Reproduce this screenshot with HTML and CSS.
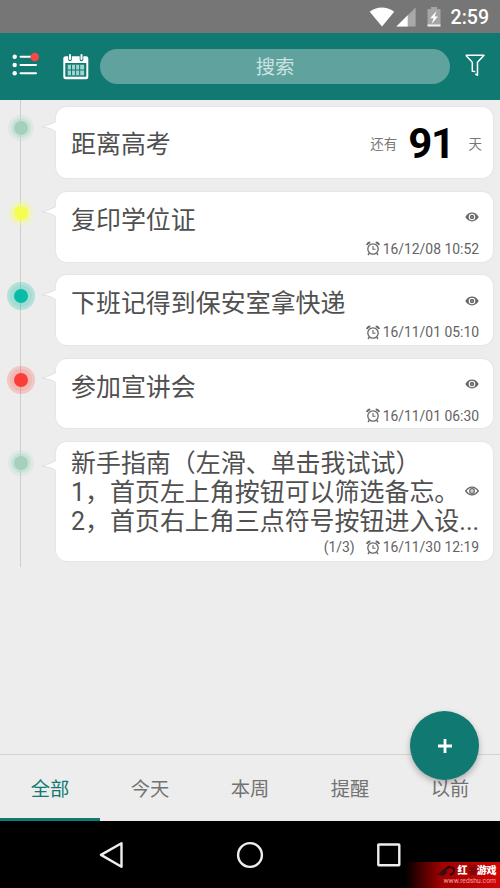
FILE: index.html
```html
<!DOCTYPE html>
<html lang="zh-CN">
<head>
<meta charset="utf-8">
<title>备忘</title>
<link rel="stylesheet" href="styles.css">
</head>
<body>
<svg class="defs" width="0" height="0" aria-hidden="true">
  <symbol id="eye" viewBox="0 0 14 10"><path d="M.3 5Q3 .6 7 .6T13.700 5Q11 9.400 7 9.400T.3 5Z" fill="#666"/><circle cx="7" cy="5" r="3.300" fill="#fff"/><circle cx="7" cy="5" r="2.200" fill="#666"/><circle cx="7" cy="5" r=".6" fill="#fff"/></symbol>
  <symbol id="eye-open" viewBox="0 0 14 10"><path d="M.7 5Q3.500 1.200 7 1.200T13.300 5Q10.500 8.800 7 8.800T.7 5Z" fill="#fff" stroke="#666" stroke-width="1.300"/><circle cx="7" cy="5" r="2.300" fill="none" stroke="#666" stroke-width="1.300"/><circle cx="7" cy="5" r=".7" fill="#666"/></symbol>
  <symbol id="alarm" viewBox="0 0 14 15"><g fill="none" stroke="#666"><circle cx="7" cy="8" r="5.200" stroke-width="1.300"/><path d="M7 5v3.300h2.500" stroke-width="1.100"/><path d="M.8 4Q1.500 1.600 4.300 1.300M13.200 4Q12.500 1.600 9.700 1.300" stroke-width="1.700"/><path d="M3.300 12.200 2 14M10.700 12.200 12 14" stroke-width="1.300"/></g></symbol>
  <symbol id="tail" viewBox="0 0 15 12"><path d="M15 0Q9 3.500 0 6Q10 7 15 11.500Z" fill="#fff"/><path d="M14 .5Q9 3.500 0 6Q10 7 14 11" fill="none" stroke="#d4d4d4" stroke-width=".6"/></symbol>
</svg>
<div class="screen">
  <header class="status">
    <svg class="wifi" width="26" height="20" viewBox="0 0 26 20"><path d="M.7 4.700Q12.800-3.600 25.200 4.700L13 19.500Z" fill="#fff"/></svg>
    <svg class="signal" width="20" height="20" viewBox="0 0 20 20"><path d="M19.600.5V19.500H.4Z" fill="#a8a8a8"/><path d="M11.700 8.200V19.500H.4Z" fill="#fff"/></svg>
    <svg class="battery" width="14" height="20" viewBox="0 0 14 20"><path d="M4 0h6v2h3.500v16H.5V2H4Z" fill="#a5a5a5"/><path d="M.5 17.500h13v2H.5Z" fill="#f2f2f2"/><path d="M9.500 4 3.200 11.300H6.600L4.600 17 11 9.500H7.600Z" fill="#fff"/></svg>
    <span class="clock">2:59</span>
  </header>
  <nav class="toolbar">
    <svg class="menu" width="28" height="26" viewBox="0 0 28 26"><g fill="#fff"><circle cx="2.700" cy="4.700" r="2.200"/><circle cx="2.700" cy="13" r="2.200"/><circle cx="2.700" cy="21.300" r="2.200"/></g><path d="M8.500 4.700H24M8.500 13H24M8.500 21.300H24" stroke="#fff" stroke-width="2" stroke-linecap="round"/><circle cx="22.700" cy="5" r="4.300" fill="#fb4743"/></svg>
    <svg class="calendar" width="26" height="27" viewBox="0 0 26 27"><rect x=".3" y="3.200" width="25" height="23" rx="2.200" fill="#fff"/><rect x="2.300" y="10" width="21" height="13.700" fill="#0f7972"/><path d="M4.700 11.700h16.400v10.600H4.700Z" fill="#9ed5cf"/><path d="M8.500 11.700v10.600M12.600 11.700v10.600M16.700 11.700v10.600M4.700 17h16.400" stroke="#0f7972" stroke-width="1"/><g stroke-linecap="round"><path d="M7 3v3.500M18.500 3v3.500" stroke="#0f7972" stroke-width="3.600"/><path d="M7 2v4M18.500 2v4" stroke="#fff" stroke-width="2"/></g></svg>
    <div class="search">搜索</div>
    <svg class="filter" width="20" height="23" viewBox="0 0 20 23"><path d="M.8 1.200H19L12.500 8.300V21.300L10.300 19.800M.8 1.200 7.300 8.300V17.200L10.300 17.600" fill="none" stroke="#fff" stroke-width="1.500" stroke-linejoin="round"/></svg>
  </nav>
  <main class="content">
    <ul class="timeline">
      <li class="entry countdown">
        <span class="dot sage"></span><svg class="tail"><use href="#tail"/></svg>
        <article class="card"><h2>距离高考</h2><span class="unit">还有</span><strong>91</strong><span class="unit">天</span></article>
      </li>
      <li class="entry">
        <span class="dot yellow"></span><svg class="tail"><use href="#tail"/></svg>
        <article class="card"><div class="body"><h2>复印学位证</h2><svg class="eye"><use href="#eye"/></svg></div><footer><svg class="alarm"><use href="#alarm"/></svg><time>16/12/08 10:52</time></footer></article>
      </li>
      <li class="entry">
        <span class="dot teal"></span><svg class="tail"><use href="#tail"/></svg>
        <article class="card"><div class="body"><h2>下班记得到保安室拿快递</h2><svg class="eye"><use href="#eye"/></svg></div><footer><svg class="alarm"><use href="#alarm"/></svg><time>16/11/01 05:10</time></footer></article>
      </li>
      <li class="entry">
        <span class="dot red"></span><svg class="tail"><use href="#tail"/></svg>
        <article class="card"><div class="body"><h2>参加宣讲会</h2><svg class="eye"><use href="#eye"/></svg></div><footer><svg class="alarm"><use href="#alarm"/></svg><time>16/11/01 06:30</time></footer></article>
      </li>
      <li class="entry guide">
        <span class="dot sage"></span><svg class="tail"><use href="#tail"/></svg>
        <article class="card"><div class="body"><h2>新手指南（左滑、单击我试试）<br>1，首页左上角按钮可以筛选备忘。<br>2，首页右上角三点符号按钮进入设...</h2><svg class="eye"><use href="#eye-open"/></svg></div><footer><span class="progress">(1/3)</span><svg class="alarm"><use href="#alarm"/></svg><time>16/11/30 12:19</time></footer></article>
      </li>
    </ul>
    <button class="fab" aria-label="新建"><svg width="14" height="14" viewBox="0 0 14 14"><path d="M7 0V14M0 7H14" stroke="#fff" stroke-width="2.800"/></svg></button>
  </main>
  <div class="tabs"><span class="tab active">全部</span><span class="tab">今天</span><span class="tab">本周</span><span class="tab">提醒</span><span class="tab">以前</span></div>
  <div class="navbar">
    <svg width="28" height="28" viewBox="0 0 28 28"><path d="M24.500 2.200V25.700L4 13.900Z" fill="none" stroke="#eee" stroke-width="2.400" stroke-linejoin="round"/></svg>
    <svg width="28" height="28" viewBox="0 0 28 28"><circle cx="14" cy="14" r="11.900" fill="none" stroke="#eee" stroke-width="2.400"/></svg>
    <svg width="28" height="28" viewBox="0 0 28 28"><rect x="3.300" y="3.500" width="21" height="20.700" rx=".5" fill="none" stroke="#eee" stroke-width="2.400"/></svg>
  </div>
  <aside class="watermark">
    <svg class="mark" width="20" height="11" viewBox="0 0 20 11"><path d="M0 8Q4 8 6 4L10 2 11 7 7 10Z" fill="#351010"/><path d="M10 3Q14-1 18 3Q19 7 14 9" fill="none" stroke="#260606" stroke-width="2"/></svg>
    <b>红<i>薯</i>游戏</b><small>www.redshu.com</small>
  </aside>
</div>
</body>
</html>
```
FILE: styles.css
```css
* { box-sizing: border-box; }
body { margin: 0; font-family: Roboto, "Noto Sans CJK SC", sans-serif; color: #505050; }
.defs { position: absolute; }
h2, ul { margin: 0; padding: 0; font-weight: 400; }
svg { display: block; flex: none; }
.screen { position: relative; width: 500px; height: 888px; display: flex; flex-direction: column; background: #ededed; overflow: hidden; }
.status { height: 33px; flex: none; background: #767676; display: flex; align-items: center; justify-content: flex-end; padding-right: 11px; color: #fff; }
.wifi { margin-right: 1px; }
.signal { margin-right: 11px; }
.battery { margin-right: 10px; }
.clock { font-size: 19.500px; line-height: 33px; font-weight: 500; padding-top: 2px; }
.toolbar { height: 67px; flex: none; background: #0f7972; display: flex; align-items: center; padding: 0 15px 0 12px; }
.menu { margin: -3px 23px 0 0; }
.calendar { margin: 0 11px 0 0; }
.search { flex: 1; height: 35px; border-radius: 18px; background: #5fa29e; color: #cce2e0; font-size: 19.300px; line-height: 35px; padding-top: 1px; text-align: center; }
.filter { margin: -3px 0 0 15px; }
.content { flex: 1; position: relative; }
.timeline { list-style: none; height: 467px; padding-top: 7px; display: flex; flex-direction: column; gap: 13.800px; background: linear-gradient(#cecece, #cecece) 20px 0 / 1px 100% no-repeat; }
.entry { display: flex; align-items: flex-start; height: 69.600px; padding-right: 7px; }
.countdown { height: 71.300px; }
.guide { height: 118.500px; }
.dot { width: 14px; height: 14px; margin: 14px 22px 0 14px; border-radius: 50%; flex: none; }
.sage { background: #a7cfbd; box-shadow: 0 0 0 3px rgba(167,215,190,.35), 0 0 0 6px rgba(180,225,205,.25); }
.yellow { background: #f5fd4e; box-shadow: 0 0 3px 3px rgba(246,253,110,.45), 0 0 0 6px rgba(246,253,160,.25); }
.teal { background: #09bca5; box-shadow: 0 0 0 4px rgba(9,190,165,.1), 0 0 0 7px rgba(9,190,165,.25); }
.red { background: #fb3e38; box-shadow: 0 0 0 4px rgba(251,62,56,.1), 0 0 0 7px rgba(251,62,56,.22); }
.tail { width: 15px; height: 12px; margin: 13.500px -1px 0 -8px; position: relative; z-index: 1; }
.guide .tail { margin-top: 18px; }
.card { flex: 1; min-width: 0; height: 100%; background: #fff; border-radius: 11px; box-shadow: 0 0 2px rgba(0,0,0,.1); padding: 15px 14px 0 15px; }
.card h2 { font-size: 24.960px; line-height: 28.700px; flex: 1; white-space: nowrap; min-width: 0; }
.body { display: flex; align-items: center; }
.eye { width: 14px; height: 10px; margin: -8px 0 0; }
.card footer { display: flex; justify-content: flex-end; align-items: center; height: 16px; margin-top: 5px; font-size: 13.900px; line-height: 16px; color: #636363; }
.alarm { width: 14px; height: 15px; margin-right: 3px; }
.progress { margin-right: 11px; }
.guide .card { padding-top: 8px; }
.guide h2 { margin-right: -14px; }
.guide .eye { margin-top: -4px; }
.guide footer { margin-top: 3px; }
.countdown .card { padding: 0 11px 0 15px; display: flex; align-items: center; }
.countdown h2 { padding-top: 5px; }
.countdown strong { color: #000; font-size: 42px; line-height: 50px; font-weight: 700; margin: 2px 15px 0 11px; letter-spacing: -1.500px; }
.unit { font-size: 13.500px; color: #777; }
.fab { position: absolute; left: 410px; bottom: -26px; z-index: 2; width: 69px; height: 69px; border: 0; border-radius: 50%; background: #0f7972; display: grid; place-items: center; box-shadow: 0 3px 6px rgba(0,0,0,.28); }
.tabs { height: 67px; flex: none; display: grid; grid-template-columns: repeat(5, 1fr); border-top: 1px solid #d2d2d2; font-size: 19.300px; text-align: center; color: #737373; }
.tab { height: 66px; line-height: 63px; padding-top: 3px; }
.tab.active { color: #0f7972; border-bottom: 3px solid #0f7972; }
.navbar { height: 67px; flex: none; background: #000; display: flex; justify-content: center; align-items: center; gap: 111px; }
.watermark { position: absolute; right: 0; bottom: 0; width: 95px; height: 26px; background: linear-gradient(90deg, #000, #a00000 38%, #d00606); color: #fff; display: grid; grid-template-columns: auto auto; grid-template-rows: 12px 9px; justify-content: end; align-items: center; column-gap: 2px; padding: 3px 4px 0 0; }
.watermark b { font: 900 10px/12px Roboto, "Noto Sans CJK SC", sans-serif; letter-spacing: -.4px; }
.watermark i { font-style: normal; color: #7a0808; }
.watermark small { grid-column: 1 / 3; justify-self: end; font-size: 6.800px; line-height: 9px; color: #f0a3a3; }
```
